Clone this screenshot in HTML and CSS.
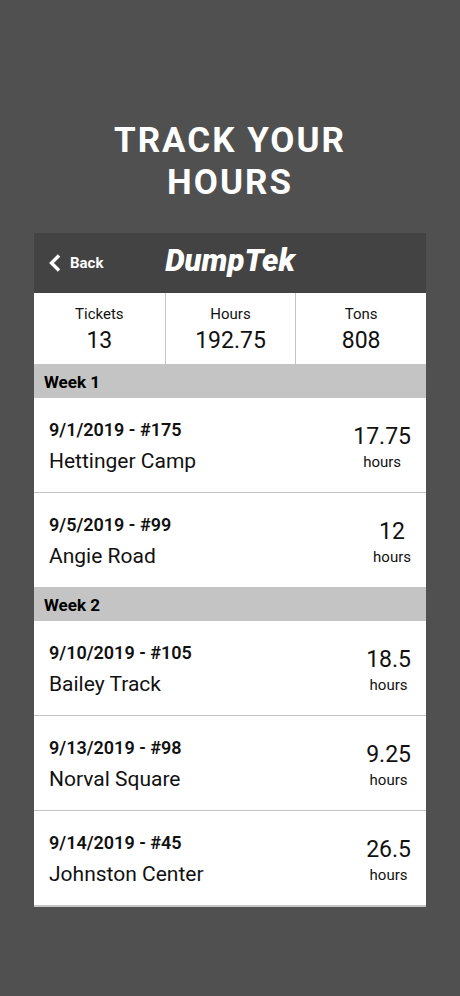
FILE: index.html
```html
<!DOCTYPE html>
<html lang="en">
<head>
    <meta charset="UTF-8">
    <meta name="viewport" content="width=device-width, initial-scale=1.0">
    <title>Track Your Hours</title>
    <link rel="stylesheet" href="styles.css">
</head>
<body>
    <h1>Track Your Hours</h1>

    <main class="app">
        <header class="topbar">
            <a class="back" href="#">
                <svg width="12" height="18" viewBox="0 0 12 18" fill="none" stroke="currentColor" stroke-width="3.4">
                    <path d="M10 1.5 L2.5 9 L10 16.5"/>
                </svg>
                Back
            </a>
            <span class="logo">DumpTek</span>
        </header>

        <dl class="stats">
            <div><dt>Tickets</dt><dd>13</dd></div>
            <div><dt>Hours</dt><dd>192.75</dd></div>
            <div><dt>Tons</dt><dd>808</dd></div>
        </dl>

        <section>
            <h2>Week 1</h2>
            <ul class="tickets">
                <li>
                    <div class="job"><strong>9/1/2019 - #175</strong><span>Hettinger Camp</span></div>
                    <div class="time"><span>17.75</span><small>hours</small></div>
                </li>
                <li>
                    <div class="job"><strong>9/5/2019 - #99</strong><span>Angie Road</span></div>
                    <div class="time"><span>12</span><small>hours</small></div>
                </li>
            </ul>
        </section>

        <section>
            <h2>Week 2</h2>
            <ul class="tickets">
                <li>
                    <div class="job"><strong>9/10/2019 - #105</strong><span>Bailey Track</span></div>
                    <div class="time"><span>18.5</span><small>hours</small></div>
                </li>
                <li>
                    <div class="job"><strong>9/13/2019 - #98</strong><span>Norval Square</span></div>
                    <div class="time"><span>9.25</span><small>hours</small></div>
                </li>
                <li>
                    <div class="job"><strong>9/14/2019 - #45</strong><span>Johnston Center</span></div>
                    <div class="time"><span>26.5</span><small>hours</small></div>
                </li>
            </ul>
        </section>
    </main>
</body>
</html>
```
FILE: styles.css
```css
* {
    box-sizing: border-box;
}

body {
    margin: 0;
    padding: 120px 34px 89px;
    background-color: #505050;
    color: #111;
    font-family: Roboto, sans-serif;
}

h1 {
    max-width: 300px;
    margin: 0 auto 29px;
    color: white;
    font-size: 35px;
    line-height: 42px;
    font-weight: 700;
    letter-spacing: 2px;
    text-align: center;
    text-transform: uppercase;
}

.app {
    background-color: white;
    border-bottom: 2px solid #c4c4c4;
}

/* header */
.topbar {
    display: grid;
    grid-template-columns: 1fr auto 1fr;
    align-items: center;
    height: 60px;
    padding: 0 15px;
    background-color: #434343;
    color: white;
}

.back {
    display: flex;
    align-items: center;
    gap: 9px;
    color: white;
    font-size: 15px;
    line-height: 20px;
    font-weight: 700;
    text-decoration: none;
}

.logo {
    padding-bottom: 4px;
    font-size: 31px;
    line-height: 36px;
    font-weight: 900;
    font-style: italic;
}

/* totals */
.stats {
    display: grid;
    grid-template-columns: repeat(3, 1fr);
    margin: 0;
    text-align: center;
}

.stats div {
    padding: 10px 0 7px;
}

.stats div + div {
    border-left: 1px solid #c4c4c4;
}

.stats dt {
    font-size: 15px;
    line-height: 22px;
}

.stats dd {
    margin: 0;
    font-size: 23px;
    line-height: 32px;
}

/* weeks */
h2 {
    margin: 0;
    padding: 2px 10px 0;
    background-color: #c4c4c4;
    color: #000;
    font-size: 17px;
    line-height: 32px;
    font-weight: 700;
}

.tickets {
    margin: 0;
    padding: 0;
    list-style: none;
}

.tickets li {
    display: flex;
    justify-content: space-between;
    padding: 16px 15px 15px;
}

.tickets li + li {
    border-top: 1px solid #c4c4c4;
}

.job,
.time {
    display: flex;
    flex-direction: column;
}

.job strong {
    font-size: 18px;
    line-height: 31px;
    font-weight: 600;
}

.job span {
    font-size: 21px;
    line-height: 32px;
}

.time {
    padding-top: 8px;
    text-align: center;
}

.time span {
    font-size: 23px;
    line-height: 30px;
}

.time small {
    font-size: 15px;
    line-height: 20px;
}
```
